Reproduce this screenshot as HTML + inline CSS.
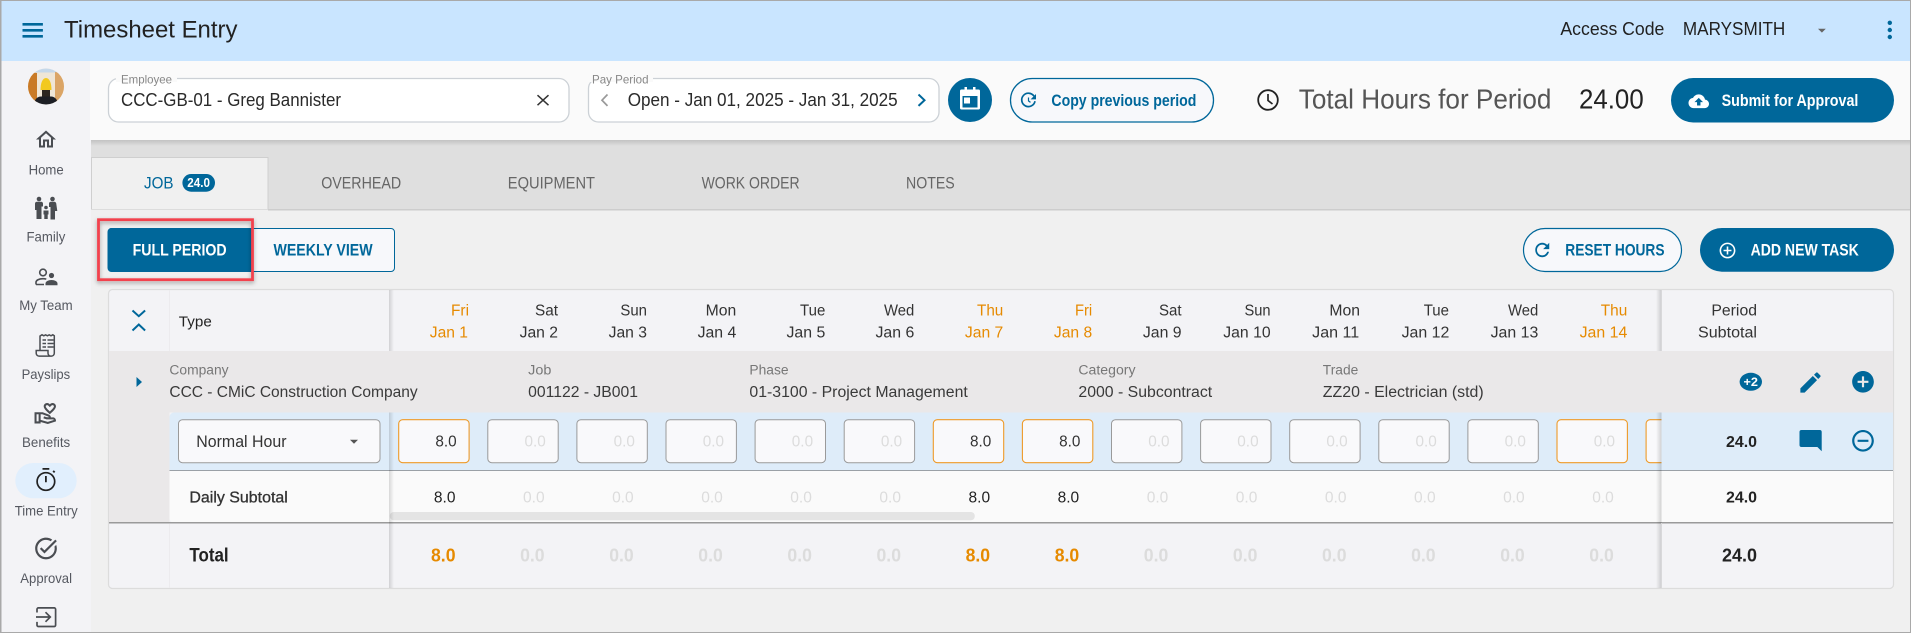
<!DOCTYPE html>
<html lang="en">
<head>
<meta charset="utf-8">
<title>Timesheet Entry</title>
<style>
html,body{margin:0;padding:0;background:#f0f0f0;width:1911px;height:633px;overflow:hidden}
svg{display:block;position:absolute;left:0;top:0}
text{font-family:"Liberation Sans",Arial,sans-serif;white-space:pre}
</style>
</head>
<body>
<svg xmlns="http://www.w3.org/2000/svg" width="1911" height="633" viewBox="0 0 1911 633">
<defs>
<linearGradient id="sl" x1="0" x2="1" y1="0" y2="0"><stop offset="0" stop-color="#000" stop-opacity=".14"/><stop offset="1" stop-color="#000" stop-opacity="0"/></linearGradient>
<linearGradient id="sr" x1="1" x2="0" y1="0" y2="0"><stop offset="0" stop-color="#000" stop-opacity=".16"/><stop offset="1" stop-color="#000" stop-opacity="0"/></linearGradient>
<linearGradient id="sd" x1="0" x2="0" y1="0" y2="1"><stop offset="0" stop-color="#000" stop-opacity=".13"/><stop offset="1" stop-color="#000" stop-opacity="0"/></linearGradient>
<clipPath id="av"><circle cx="46" cy="86.5" r="18"/></clipPath>
<clipPath id="cl"><rect x="389" y="412" width="1272.5" height="59"/></clipPath>
<filter id="ds" x="-10%" y="-20%" width="120%" height="140%"><feDropShadow dx="0" dy="2" stdDeviation="2" flood-color="#000" flood-opacity=".35"/></filter>
</defs>

<!-- base -->
<rect width="1911" height="633" fill="#f0f0f0"/>
<rect x="0" y="0" width="1911" height="61" fill="#c9e5ff"/>
<rect x="0" y="61" width="91" height="572" fill="#f3f3f6"/>

<!-- app bar -->
<path fill="#00679a" d="M22.500 23h20.400v2.600H22.500zM22.500 29h20.400v2.600H22.500zM22.500 35h20.400v2.600H22.500z"/>
<g fill="#212121">
<text x="64" y="37.700" font-size="24.500" textLength="173.500" lengthAdjust="spacingAndGlyphs">Timesheet Entry</text>
<text x="1560.400" y="35" font-size="18" textLength="104" lengthAdjust="spacingAndGlyphs">Access Code</text>
<text x="1682.900" y="35" font-size="18" textLength="102.400" lengthAdjust="spacingAndGlyphs">MARYSMITH</text>
</g>
<path fill="#666" d="M1818 28.700h7.800l-3.900 3.900z"/>
<g fill="#00679a"><circle cx="1889.800" cy="22.800" r="2.200"/><circle cx="1889.800" cy="30" r="2.200"/><circle cx="1889.800" cy="37" r="2.200"/></g>

<!-- top bar -->
<rect x="90" y="61" width="1821" height="79" fill="#fafafa"/>
<rect x="91" y="140" width="1820" height="70" fill="#dfdfdf"/>
<rect x="91" y="140" width="1820" height="6" fill="url(#sd)"/>

<rect x="108.500" y="78.500" width="460.500" height="43.500" rx="10" fill="#fff" stroke="#ccd1d6" stroke-width="1.300"/>
<rect x="116" y="76" width="61" height="6" fill="#fafafa"/>
<text x="121" y="83.300" font-size="12" fill="#888" textLength="51" lengthAdjust="spacingAndGlyphs">Employee</text>
<text x="121" y="106" font-size="18.500" fill="#2a2a2a" textLength="220" lengthAdjust="spacingAndGlyphs">CCC-GB-01 - Greg Bannister</text>
<path stroke="#333" stroke-width="1.500" fill="none" d="M537.500 95.200l11 10M548.500 95.200l-11 10"/>

<rect x="588.500" y="78.500" width="350.500" height="43.500" rx="10" fill="#fff" stroke="#ccd1d6" stroke-width="1.300"/>
<rect x="588" y="76" width="65" height="6" fill="#fafafa"/>
<text x="592" y="83.300" font-size="12" fill="#888" textLength="56.500" lengthAdjust="spacingAndGlyphs">Pay Period</text>
<path stroke="#999" stroke-width="1.700" fill="none" d="M607.500 94.500l-5.500 5.700 5.500 5.700"/>
<text x="627.700" y="106" font-size="18.500" fill="#2a2a2a" textLength="270" lengthAdjust="spacingAndGlyphs">Open - Jan 01, 2025 - Jan 31, 2025</text>
<path stroke="#00679a" stroke-width="2" fill="none" d="M918.500 94.500l6 5.700-6 5.700"/>

<circle cx="970" cy="100" r="22" fill="#00679a"/>
<path fill="#fff" d="M961.500 89.500h3v-2.500h2.500v2.500h6v-2.500h2.500v2.500h3a1.500 1.500 0 0 1 1.500 1.500v17a1.500 1.500 0 0 1-1.500 1.500h-17a1.500 1.500 0 0 1-1.500-1.500v-17a1.500 1.500 0 0 1 1.500-1.500z"/>
<rect x="962.500" y="96" width="15" height="11.500" fill="#00679a"/>
<rect x="964" y="97.500" width="6" height="6" fill="#fff"/>

<rect x="1010.500" y="78.500" width="203" height="43.500" rx="21.700" fill="#f7f8fb" stroke="#00679a" stroke-width="1.300"/>
<g fill="none" stroke="#00679a" stroke-width="1.700"><path d="M1034 96.200a6.700 6.700 0 1 0 1 5"/></g>
<path fill="#00679a" d="M1036 94v5.400h-5.400z"/><path stroke="#00679a" stroke-width="1.200" fill="none" d="M1028.500 97.500v3.400l2 1.500"/>
<text x="1051.400" y="106" font-size="16.500" font-weight="bold" fill="#00679a" textLength="145" lengthAdjust="spacingAndGlyphs">Copy previous period</text>

<circle cx="1268" cy="100" r="9.800" fill="none" stroke="#222" stroke-width="1.800"/>
<path stroke="#222" stroke-width="1.700" fill="none" d="M1268 94v6.500l4.500 3.500"/>
<text x="1298.800" y="108.700" font-size="27.500" fill="#555" textLength="252.600" lengthAdjust="spacingAndGlyphs">Total Hours for Period</text>
<text x="1579" y="108.700" font-size="27.500" fill="#222" textLength="64.700" lengthAdjust="spacingAndGlyphs">24.00</text>

<rect x="1671" y="78" width="223" height="44.500" rx="22.200" fill="#00679a"/>
<svg x="1688.500" y="91" width="20.500" height="20.500" viewBox="0 0 24 24"><path fill="#fff" d="M19.350 10.040C18.670 6.590 15.640 4 12 4 9.110 4 6.600 5.640 5.350 8.040 2.340 8.360 0 10.910 0 14c0 3.310 2.690 6 6 6h13c2.760 0 5-2.240 5-5 0-2.640-2.050-4.780-4.650-4.960zM14 13v4h-4v-4H7l5-5 5 5h-3z"/></svg>
<text x="1721.600" y="106" font-size="16.500" font-weight="bold" fill="#fff" textLength="136.800" lengthAdjust="spacingAndGlyphs">Submit for Approval</text>

<!-- tabs -->
<rect x="91.500" y="157.500" width="176.500" height="52.500" fill="#f0f0f0" stroke="#cfcfcf" stroke-width="1"/>
<rect x="91" y="209" width="177" height="3" fill="#f0f0f0"/>
<rect x="268" y="209" width="1643" height="1.500" fill="#cdcdcd"/>
<rect x="91" y="209" width="177" height="1" fill="#dcdcdc"/>
<text x="144" y="188.300" font-size="16.500" fill="#00679a" textLength="29.500" lengthAdjust="spacingAndGlyphs">JOB</text>
<rect x="182.400" y="174" width="32.600" height="17.700" rx="8.800" fill="#00679a"/>
<text x="187.300" y="187" font-size="12.500" font-weight="bold" fill="#fff" textLength="22.700" lengthAdjust="spacingAndGlyphs">24.0</text>
<g fill="#666" font-size="16.500">
<text x="321.200" y="188.300" textLength="80" lengthAdjust="spacingAndGlyphs">OVERHEAD</text>
<text x="507.800" y="188.300" textLength="87.200" lengthAdjust="spacingAndGlyphs">EQUIPMENT</text>
<text x="701.600" y="188.300" textLength="98" lengthAdjust="spacingAndGlyphs">WORK ORDER</text>
<text x="906" y="188.300" textLength="48.700" lengthAdjust="spacingAndGlyphs">NOTES</text>
</g>

<!-- view toggle -->
<rect x="108" y="228.500" width="286.500" height="43" rx="3.500" fill="#f7f8fb" stroke="#00679a" stroke-width="1"/>
<path fill="#00679a" d="M111.500 228h140v43.500h-140a3.500 3.500 0 0 1-3.500-3.500v-36.500a3.500 3.500 0 0 1 3.500-3.500z"/>
<text x="132.600" y="255.300" font-size="16.500" font-weight="bold" fill="#fff" textLength="94" lengthAdjust="spacingAndGlyphs">FULL PERIOD</text>
<text x="273.500" y="255.300" font-size="16.500" font-weight="bold" fill="#00679a" textLength="99.100" lengthAdjust="spacingAndGlyphs">WEEKLY VIEW</text>
<rect x="98.500" y="219.700" width="154" height="60" fill="none" stroke="#f2434d" stroke-width="2.800" filter="url(#ds)"/>

<rect x="1523.500" y="228.500" width="158" height="43" rx="21.500" fill="#f7f8fb" stroke="#00679a" stroke-width="1.200"/>
<svg x="1533.500" y="241" width="17.500" height="18" viewBox="2 2 20 20" preserveAspectRatio="none"><path fill="#00679a" d="M17.650 6.350C16.200 4.900 14.210 4 12 4c-4.420 0-7.990 3.580-7.990 8s3.570 8 7.990 8c3.730 0 6.840-2.550 7.730-6h-2.080c-.82 2.330-3.040 4-5.650 4-3.310 0-6-2.690-6-6s2.690-6 6-6c1.660 0 3.140.69 4.220 1.780L13 11h7V4l-2.350 2.350z"/></svg>
<text x="1565.300" y="255.300" font-size="16.500" font-weight="bold" fill="#00679a" textLength="99.200" lengthAdjust="spacingAndGlyphs">RESET HOURS</text>
<rect x="1700" y="228" width="194" height="43.700" rx="21.800" fill="#00679a"/>
<svg x="1718" y="241" width="19" height="19" viewBox="0 0 24 24"><path fill="#fff" d="M13 7h-2v4H7v2h4v4h2v-4h4v-2h-4V7zm-1-5C6.480 2 2 6.480 2 12s4.480 10 10 10 10-4.480 10-10S17.520 2 12 2zm0 18c-4.410 0-8-3.590-8-8s3.590-8 8-8 8 3.590 8 8-3.590 8-8 8z"/></svg>
<text x="1750.600" y="255.300" font-size="16.500" font-weight="bold" fill="#fff" textLength="108.200" lengthAdjust="spacingAndGlyphs">ADD NEW TASK</text>

<!-- grid -->
<rect x="108.500" y="289.500" width="1785" height="299" rx="4" fill="#f3f3f6" stroke="#dcdcdc" stroke-width="1.200"/>
<rect x="109" y="351" width="1784" height="61.500" fill="#eae8e9"/>
<rect x="109" y="412" width="60.500" height="110.500" fill="#eae8e9"/>
<path fill="#deecf9" d="M174 412.500h1719v58h-1723.500v-53.500a4.500 4.500 0 0 1 4.500-4.500z"/>
<path fill="#fafafa" d="M169.500 470.500h1723.500v52h-1719.500a4 4 0 0 1-4-4z"/>
<rect x="169" y="290" width="1" height="61" fill="#ecebee"/>
<rect x="169" y="524" width="1" height="64" fill="#ecebee"/>

<rect x="389.800" y="512" width="585" height="8.300" rx="4" fill="#e4e4e4"/>
<rect x="169.500" y="470" width="1723.500" height="1" fill="#9aa0a6"/>
<rect x="109" y="522" width="1784" height="1.500" fill="#9a9a9a"/>

<!-- header row -->
<path fill="none" stroke="#00679a" stroke-width="2" d="M132.500 310.500l6.300 5.700 6.300-5.700M132.500 330.500l6.300-6 6.300 6"/>
<text x="178.800" y="326.300" font-size="15" fill="#222" textLength="33" lengthAdjust="spacingAndGlyphs">Type</text>
<g font-size="15.500" fill="#333">
<text x="451" y="315.300" fill="#e68a00" textLength="18" lengthAdjust="spacingAndGlyphs">Fri</text>
<text x="429.800" y="337.300" fill="#e68a00" textLength="38.200" lengthAdjust="spacingAndGlyphs">Jan 1</text>
<text x="535" y="315.300" textLength="23" lengthAdjust="spacingAndGlyphs">Sat</text>
<text x="519.600" y="337.300" textLength="38.400" lengthAdjust="spacingAndGlyphs">Jan 2</text>
<text x="620.400" y="315.300" textLength="26.600" lengthAdjust="spacingAndGlyphs">Sun</text>
<text x="608.600" y="337.300" textLength="38.400" lengthAdjust="spacingAndGlyphs">Jan 3</text>
<text x="705.700" y="315.300" textLength="30.600" lengthAdjust="spacingAndGlyphs">Mon</text>
<text x="697.600" y="337.300" textLength="38.700" lengthAdjust="spacingAndGlyphs">Jan 4</text>
<text x="800" y="315.300" textLength="25.300" lengthAdjust="spacingAndGlyphs">Tue</text>
<text x="786.500" y="337.300" textLength="38.800" lengthAdjust="spacingAndGlyphs">Jan 5</text>
<text x="884" y="315.300" textLength="30.300" lengthAdjust="spacingAndGlyphs">Wed</text>
<text x="875.500" y="337.300" textLength="38.800" lengthAdjust="spacingAndGlyphs">Jan 6</text>
<text x="977" y="315.300" fill="#e68a00" textLength="26.300" lengthAdjust="spacingAndGlyphs">Thu</text>
<text x="964.900" y="337.300" fill="#e68a00" textLength="38.400" lengthAdjust="spacingAndGlyphs">Jan 7</text>
<text x="1075" y="315.300" fill="#e68a00" textLength="17.200" lengthAdjust="spacingAndGlyphs">Fri</text>
<text x="1053.900" y="337.300" fill="#e68a00" textLength="38.300" lengthAdjust="spacingAndGlyphs">Jan 8</text>
<text x="1159" y="315.300" textLength="22.600" lengthAdjust="spacingAndGlyphs">Sat</text>
<text x="1142.900" y="337.300" textLength="38.700" lengthAdjust="spacingAndGlyphs">Jan 9</text>
<text x="1244.500" y="315.300" textLength="26.100" lengthAdjust="spacingAndGlyphs">Sun</text>
<text x="1223.300" y="337.300" textLength="47.300" lengthAdjust="spacingAndGlyphs">Jan 10</text>
<text x="1329.400" y="315.300" textLength="30.600" lengthAdjust="spacingAndGlyphs">Mon</text>
<text x="1312.200" y="337.300" textLength="47" lengthAdjust="spacingAndGlyphs">Jan 11</text>
<text x="1423.700" y="315.300" textLength="25.300" lengthAdjust="spacingAndGlyphs">Tue</text>
<text x="1401.600" y="337.300" textLength="47.800" lengthAdjust="spacingAndGlyphs">Jan 12</text>
<text x="1508" y="315.300" textLength="30.300" lengthAdjust="spacingAndGlyphs">Wed</text>
<text x="1490.600" y="337.300" textLength="47.700" lengthAdjust="spacingAndGlyphs">Jan 13</text>
<text x="1600.800" y="315.300" fill="#e68a00" textLength="26.500" lengthAdjust="spacingAndGlyphs">Thu</text>
<text x="1579.600" y="337.300" fill="#e68a00" textLength="47.700" lengthAdjust="spacingAndGlyphs">Jan 14</text>
</g>

<!-- group row -->
<path fill="#00679a" d="M136.500 377l5.500 5-5.500 5z"/>
<g font-size="13.500" fill="#777">
<text x="169.400" y="374.300" textLength="59.200" lengthAdjust="spacingAndGlyphs">Company</text>
<text x="528.200" y="374.300" textLength="23.200" lengthAdjust="spacingAndGlyphs">Job</text>
<text x="749.400" y="374.300" textLength="39.200" lengthAdjust="spacingAndGlyphs">Phase</text>
<text x="1078.400" y="374.300" textLength="57.100" lengthAdjust="spacingAndGlyphs">Category</text>
<text x="1322.800" y="374.300" textLength="35.500" lengthAdjust="spacingAndGlyphs">Trade</text>
</g>
<g font-size="15.500" fill="#3a3a3a">
<text x="169.400" y="397" textLength="248.200" lengthAdjust="spacingAndGlyphs">CCC - CMiC Construction Company</text>
<text x="528.200" y="397" textLength="109.800" lengthAdjust="spacingAndGlyphs">001122 - JB001</text>
<text x="749.400" y="397" textLength="218.400" lengthAdjust="spacingAndGlyphs">01-3100 - Project Management</text>
<text x="1078.400" y="397" textLength="133.800" lengthAdjust="spacingAndGlyphs">2000 - Subcontract</text>
<text x="1322.800" y="397" textLength="160.900" lengthAdjust="spacingAndGlyphs">ZZ20 - Electrician (std)</text>
</g>

<!-- type select -->
<rect x="178.500" y="419.700" width="201.500" height="43" rx="4" fill="#f9f9fb" stroke="#9a9a9a" stroke-width="1"/>
<text x="196.300" y="447" font-size="16.500" fill="#333" textLength="90.200" lengthAdjust="spacingAndGlyphs">Normal Hour</text>
<path fill="#555" d="M350 439.700h8l-4 4z"/>

<!-- hour inputs -->
<g clip-path="url(#cl)">
<g fill="#f9f9fb" stroke="#9a9a9a" stroke-width="1">
<rect x="487.800" y="419.700" width="70.400" height="43" rx="4"/>
<rect x="576.900" y="419.700" width="70.400" height="43" rx="4"/>
<rect x="666" y="419.700" width="70.400" height="43" rx="4"/>
<rect x="755.100" y="419.700" width="70.400" height="43" rx="4"/>
<rect x="844.200" y="419.700" width="70.400" height="43" rx="4"/>
<rect x="1111.500" y="419.700" width="70.400" height="43" rx="4"/>
<rect x="1200.600" y="419.700" width="70.400" height="43" rx="4"/>
<rect x="1289.700" y="419.700" width="70.400" height="43" rx="4"/>
<rect x="1378.800" y="419.700" width="70.400" height="43" rx="4"/>
<rect x="1467.900" y="419.700" width="70.400" height="43" rx="4"/>
</g>
<g fill="#f9f9fb" stroke="#ee9a28" stroke-width="1.100">
<rect x="398.700" y="419.700" width="70.400" height="43" rx="4"/>
<rect x="933.300" y="419.700" width="70.400" height="43" rx="4"/>
<rect x="1022.400" y="419.700" width="70.400" height="43" rx="4"/>
<rect x="1557" y="419.700" width="70.400" height="43" rx="4"/>
<rect x="1646.100" y="419.700" width="70.400" height="43" rx="4"/>
</g>
</g>
<g font-size="15.500" fill="#dcdcdc">
<text x="435.400" y="446.300" fill="#333" textLength="21.300" lengthAdjust="spacingAndGlyphs">8.0</text>
<text x="524.500" y="446.300" textLength="21.300" lengthAdjust="spacingAndGlyphs">0.0</text>
<text x="613.600" y="446.300" textLength="21.300" lengthAdjust="spacingAndGlyphs">0.0</text>
<text x="702.700" y="446.300" textLength="21.300" lengthAdjust="spacingAndGlyphs">0.0</text>
<text x="791.800" y="446.300" textLength="21.300" lengthAdjust="spacingAndGlyphs">0.0</text>
<text x="880.900" y="446.300" textLength="21.300" lengthAdjust="spacingAndGlyphs">0.0</text>
<text x="970" y="446.300" fill="#333" textLength="21.300" lengthAdjust="spacingAndGlyphs">8.0</text>
<text x="1059.100" y="446.300" fill="#333" textLength="21.300" lengthAdjust="spacingAndGlyphs">8.0</text>
<text x="1148.200" y="446.300" textLength="21.300" lengthAdjust="spacingAndGlyphs">0.0</text>
<text x="1237.300" y="446.300" textLength="21.300" lengthAdjust="spacingAndGlyphs">0.0</text>
<text x="1326.400" y="446.300" textLength="21.300" lengthAdjust="spacingAndGlyphs">0.0</text>
<text x="1415.500" y="446.300" textLength="21.300" lengthAdjust="spacingAndGlyphs">0.0</text>
<text x="1504.600" y="446.300" textLength="21.300" lengthAdjust="spacingAndGlyphs">0.0</text>
<text x="1593.700" y="446.300" textLength="21.300" lengthAdjust="spacingAndGlyphs">0.0</text>
</g>

<!-- daily subtotal -->
<text x="189.400" y="502.300" font-size="15.500" fill="#333" stroke="#333" stroke-width=".3" textLength="98.400" lengthAdjust="spacingAndGlyphs">Daily Subtotal</text>
<g font-size="15.500" fill="#dcdcdc">
<text x="433.900" y="502.300" fill="#222" textLength="21.600" lengthAdjust="spacingAndGlyphs">8.0</text>
<text x="523" y="502.300" textLength="21.600" lengthAdjust="spacingAndGlyphs">0.0</text>
<text x="612.100" y="502.300" textLength="21.600" lengthAdjust="spacingAndGlyphs">0.0</text>
<text x="701.200" y="502.300" textLength="21.600" lengthAdjust="spacingAndGlyphs">0.0</text>
<text x="790.300" y="502.300" textLength="21.600" lengthAdjust="spacingAndGlyphs">0.0</text>
<text x="879.400" y="502.300" textLength="21.600" lengthAdjust="spacingAndGlyphs">0.0</text>
<text x="968.500" y="502.300" fill="#222" textLength="21.600" lengthAdjust="spacingAndGlyphs">8.0</text>
<text x="1057.600" y="502.300" fill="#222" textLength="21.600" lengthAdjust="spacingAndGlyphs">8.0</text>
<text x="1146.700" y="502.300" textLength="21.600" lengthAdjust="spacingAndGlyphs">0.0</text>
<text x="1235.800" y="502.300" textLength="21.600" lengthAdjust="spacingAndGlyphs">0.0</text>
<text x="1324.900" y="502.300" textLength="21.600" lengthAdjust="spacingAndGlyphs">0.0</text>
<text x="1414" y="502.300" textLength="21.600" lengthAdjust="spacingAndGlyphs">0.0</text>
<text x="1503.100" y="502.300" textLength="21.600" lengthAdjust="spacingAndGlyphs">0.0</text>
<text x="1592.200" y="502.300" textLength="21.600" lengthAdjust="spacingAndGlyphs">0.0</text>
</g>

<!-- total -->
<text x="189.400" y="561.300" font-size="19" font-weight="bold" fill="#222" textLength="39.200" lengthAdjust="spacingAndGlyphs">Total</text>
<g font-size="18.500" font-weight="bold" fill="#dcdcdc">
<text x="431" y="561.300" fill="#e68a00" textLength="24.500" lengthAdjust="spacingAndGlyphs">8.0</text>
<text x="520.100" y="561.300" textLength="24.500" lengthAdjust="spacingAndGlyphs">0.0</text>
<text x="609.200" y="561.300" textLength="24.500" lengthAdjust="spacingAndGlyphs">0.0</text>
<text x="698.300" y="561.300" textLength="24.500" lengthAdjust="spacingAndGlyphs">0.0</text>
<text x="787.400" y="561.300" textLength="24.500" lengthAdjust="spacingAndGlyphs">0.0</text>
<text x="876.500" y="561.300" textLength="24.500" lengthAdjust="spacingAndGlyphs">0.0</text>
<text x="965.600" y="561.300" fill="#e68a00" textLength="24.500" lengthAdjust="spacingAndGlyphs">8.0</text>
<text x="1054.700" y="561.300" fill="#e68a00" textLength="24.500" lengthAdjust="spacingAndGlyphs">8.0</text>
<text x="1143.800" y="561.300" textLength="24.500" lengthAdjust="spacingAndGlyphs">0.0</text>
<text x="1232.900" y="561.300" textLength="24.500" lengthAdjust="spacingAndGlyphs">0.0</text>
<text x="1322" y="561.300" textLength="24.500" lengthAdjust="spacingAndGlyphs">0.0</text>
<text x="1411.100" y="561.300" textLength="24.500" lengthAdjust="spacingAndGlyphs">0.0</text>
<text x="1500.200" y="561.300" textLength="24.500" lengthAdjust="spacingAndGlyphs">0.0</text>
<text x="1589.300" y="561.300" textLength="24.500" lengthAdjust="spacingAndGlyphs">0.0</text>
</g>

<!-- frozen column shadows -->
<rect x="389" y="290" width="5" height="61" fill="url(#sl)"/>
<rect x="389" y="412.500" width="5" height="175.500" fill="url(#sl)"/>
<rect x="1656" y="290" width="5.500" height="61" fill="url(#sr)"/>
<rect x="1656" y="412.500" width="5.500" height="175.500" fill="url(#sr)"/>
<rect x="1661" y="290" width="1" height="61" fill="#d8d8da"/>
<rect x="1661" y="523" width="1" height="65" fill="#d8d8da"/>

<!-- right column -->
<g fill="#333" font-size="15.500">
<text x="1711.400" y="315.300" textLength="45.600" lengthAdjust="spacingAndGlyphs">Period</text>
<text x="1698" y="337.300" textLength="59" lengthAdjust="spacingAndGlyphs">Subtotal</text>
</g>
<g fill="#222" font-weight="bold">
<text x="1726" y="447" font-size="15.500" textLength="31" lengthAdjust="spacingAndGlyphs">24.0</text>
<text x="1726" y="502.300" font-size="15.500" textLength="31" lengthAdjust="spacingAndGlyphs">24.0</text>
<text x="1722" y="561.300" font-size="18.500" textLength="35" lengthAdjust="spacingAndGlyphs">24.0</text>
</g>
<ellipse cx="1750.800" cy="381.800" rx="11.200" ry="9" fill="#00679a"/>
<text x="1743.500" y="386" font-size="12" font-weight="bold" fill="#fff" textLength="14.500" lengthAdjust="spacingAndGlyphs">+2</text>
<svg x="1797" y="369" width="27" height="27" viewBox="0 0 24 24"><path fill="#00679a" d="M3 17.250V21h3.750L17.810 9.940l-3.750-3.750L3 17.250zM20.710 7.040c.39-.39.39-1.020 0-1.410l-2.340-2.340c-.39-.39-1.020-.39-1.410 0l-1.830 1.830 3.750 3.750 1.830-1.830z"/></svg>
<svg x="1850" y="368.800" width="26" height="26" viewBox="0 0 24 24"><path fill="#00679a" d="M12 2C6.480 2 2 6.480 2 12s4.480 10 10 10 10-4.480 10-10S17.520 2 12 2zm5 11h-4v4h-2v-4H7v-2h4V7h2v4h4v2z"/></svg>
<path fill="#00679a" d="M1801.500 430h18.200a2 2 0 0 1 2 2v19.300l-4.300-4.300h-15.900a2 2 0 0 1-2-2v-13a2 2 0 0 1 2-2z"/>
<svg x="1850" y="427.800" width="26" height="26" viewBox="0 0 24 24"><path fill="#00679a" d="M7 11v2h10v-2H7zm5-9C6.480 2 2 6.480 2 12s4.480 10 10 10 10-4.480 10-10S17.520 2 12 2zm0 18c-4.410 0-8-3.590-8-8s3.590-8 8-8 8 3.590 8 8-3.590 8-8 8z"/></svg>

<!-- sidebar -->
<g clip-path="url(#av)">
<rect x="28" y="68" width="36" height="38" fill="#efe6d6"/>
<rect x="28" y="68" width="36" height="4.500" fill="#c5d8ea"/>
<path fill="#c97a26" d="M28 72l9 1v32H28z"/>
<path fill="#dba566" d="M55 72l9 1v32h-9z"/>
<rect x="42" y="88" width="8" height="9" fill="#2c2620"/>
<path fill="#f2c91f" d="M40.500 90c0-7 2-12 5.500-12s5.500 5 5.500 12z"/>
<path fill="#1d1f25" d="M34 105c0-5 3-8.500 7-8.500h10c4 0 7 3.500 7 8.500z"/>
</g>

<svg x="34" y="127.500" width="24" height="24" viewBox="0 0 24 24"><path fill="#4a4d52" d="M12 5.690l5 4.500V18h-2v-6H9v6H7v-7.810l5-4.500M12 3L2 12h3v8h6v-6h2v6h6v-8h3L12 3z"/></svg>
<g fill="#4a4d52">
<circle cx="39" cy="199" r="2.300"/><circle cx="52.500" cy="199" r="2.300"/><circle cx="46" cy="207.500" r="1.800"/>
<path d="M35 203.500a2 2 0 0 1 2-1.800h4a2 2 0 0 1 2 1.800v3h-1.500v12.500h-5v-9h-1.500z"/>
<path d="M49 203.500a2 2 0 0 1 2-1.800h3.500a2 2 0 0 1 1.700 1.500l1.100 7.800h-2.300v8.500h-4.500v-12.500h-1.500z"/>
<path d="M43.500 210.500h5v4h-.8v4.500h-3.400v-4.500h-.8z"/>
</g>
<g fill="none" stroke="#4a4d52" stroke-width="1.600"><circle cx="43" cy="272.500" r="3.300"/><path d="M36 284.500v-2.200c0-2 3-3.600 7-3.600 1.200 0 2.300.1 3.300.4M36 284.500h8"/></g>
<g fill="#4a4d52"><circle cx="51.500" cy="275.500" r="2.600"/><path d="M45.500 285.300v-1.800c0-2 2.700-3.500 6-3.500s6 1.500 6 3.500v1.800z"/></g>

<g fill="none" stroke="#4a4d52" stroke-width="1.500"><path d="M40 350.500V336l2-1.200 1.800 1 1.800-1 1.800 1 1.800-1 1.800 1 1.800-1 1.500 1v17.500a2.800 2.800 0 0 1-2.800 2.800H39a2.800 2.800 0 0 1-2.800-2.800v-2.800H48v2.800a2.800 2.800 0 0 0 2.800 2.800"/></g>
<path stroke="#4a4d52" stroke-width="1.500" d="M42.500 340h3.500M42.500 343.500h3.500M42.500 347h3.500M47.500 340h6M47.500 343.500h6M47.500 347h6"/>

<svg x="33.500" y="401" width="24.500" height="24.500" viewBox="0 0 24 24"><path fill="#4a4d52" d="M16 13c3.090-2.810 6-5.440 6-7.700C22 3.450 20.550 2 18.700 2c-1.040 0-2.050.49-2.700 1.250C15.340 2.490 14.340 2 13.300 2 11.450 2 10 3.450 10 5.300c0 2.260 2.910 4.890 6 7.700zm-2.700-9c.44 0 .89.21 1.180.55L16 6l1.520-1.450c.29-.34.74-.55 1.180-.55.74 0 1.300.56 1.300 1.300 0 1.120-2.040 3.170-4 4.990-1.960-1.820-4-3.880-4-4.990 0-.74.56-1.300 1.300-1.300zM19 16h-2c0-1.200-.75-2.280-1.870-2.700L8.970 11H1v11h6v-1.440l7 1.940 8-2.500v-1c0-1.660-1.340-3-3-3zM3 20v-7h2v7H3zm10.970.41L7 18.500V13h1.610l5.820 2.170c.34.13.57.46.57.83 0 0-1.990-.05-2.300-.15l-2.380-.79-.63 1.900 2.380.79c.51.17 1.040.26 1.580.26H19c.39 0 .74.23.9.56l-5.930 1.840z"/></svg>

<rect x="15.300" y="463" width="61.400" height="35.200" rx="17.600" fill="#e1effd"/>
<g fill="none" stroke="#222" stroke-width="1.700"><circle cx="45.900" cy="481.500" r="8.800"/></g>
<path fill="#222" d="M42.500 468h6.800v1.800h-6.800zM45 476h1.800v6.300H45zM52.500 471.500l1.300-1.300 1.500 1.500-1.300 1.300z"/>

<svg x="33" y="535.500" width="26" height="26" viewBox="0 0 24 24"><path fill="#4a4d52" d="M22 5.180L10.590 16.600l-4.240-4.240 1.410-1.410 2.830 2.830 10-10L22 5.180zm-2.210 5.040c.13.570.21 1.170.21 1.780 0 4.420-3.580 8-8 8s-8-3.580-8-8 3.580-8 8-8c1.580 0 3.040.46 4.280 1.250l1.440-1.440C16.100 2.670 14.130 2 12 2 6.480 2 2 6.480 2 12s4.480 10 10 10 10-4.480 10-10c0-1.190-.22-2.330-.6-3.390l-1.610 1.610z"/></svg>
<g fill="none" stroke="#4a4d52" stroke-width="1.700"><path d="M37 612.500v-3.200a1.400 1.400 0 0 1 1.400-1.400h15.800a1.400 1.400 0 0 1 1.400 1.400v15.800a1.400 1.400 0 0 1-1.400 1.400H38.400a1.400 1.400 0 0 1-1.400-1.400v-3.200"/><path d="M36 617h13.500M45.500 612.200l4.800 4.800-4.800 4.800"/></g>

<g fill="#555860" font-size="14">
<text x="28.600" y="174.300" textLength="35.100" lengthAdjust="spacingAndGlyphs">Home</text>
<text x="26.500" y="241.700" textLength="38.800" lengthAdjust="spacingAndGlyphs">Family</text>
<text x="19.200" y="310" textLength="53.500" lengthAdjust="spacingAndGlyphs">My Team</text>
<text x="21.600" y="379" textLength="48.600" lengthAdjust="spacingAndGlyphs">Payslips</text>
<text x="22" y="447" textLength="48.200" lengthAdjust="spacingAndGlyphs">Benefits</text>
<text x="14.700" y="515.300" textLength="63" lengthAdjust="spacingAndGlyphs">Time Entry</text>
<text x="20.300" y="583" textLength="51.700" lengthAdjust="spacingAndGlyphs">Approval</text>
</g>

<!-- screenshot frame -->
<rect x="0" y="0" width="1911" height="1" fill="#a9a9a9"/>
<rect x="0" y="0" width="1.500" height="633" fill="#a9a9a9"/>
<rect x="1910" y="0" width="1" height="633" fill="#a9a9a9"/>
<rect x="0" y="632" width="1911" height="1" fill="#a9a9a9"/>
</svg>
</body>
</html>
